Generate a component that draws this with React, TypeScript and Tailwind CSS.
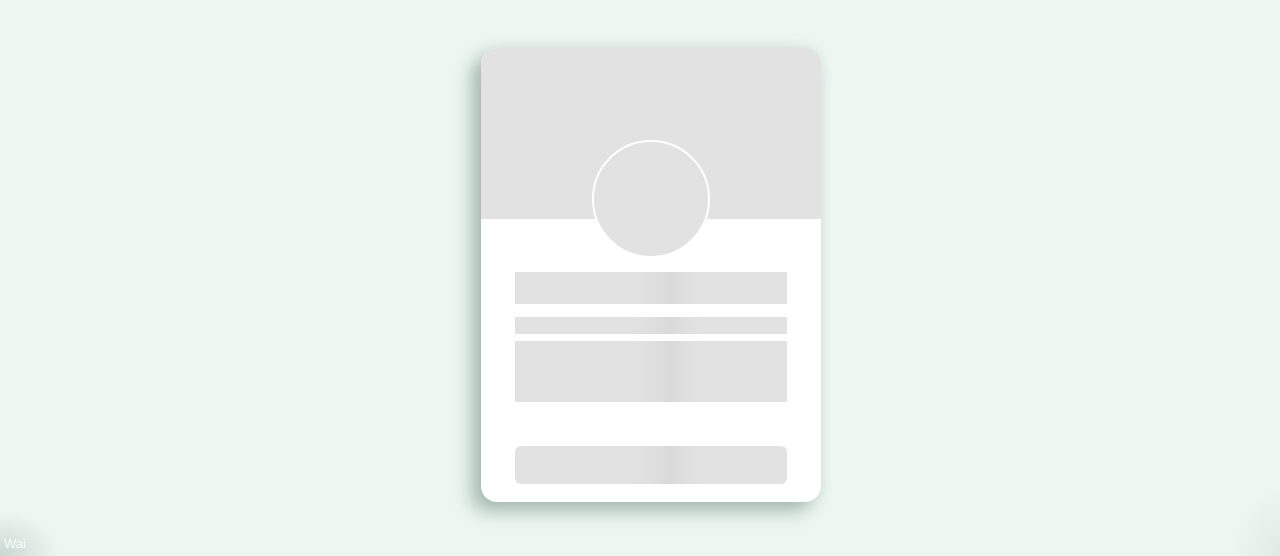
export default function App() {
  const shimmer =
    "bg-[linear-gradient(90deg,#e2e2e2_0%,#e2e2e2_42%,#dfdfdf_50%,#d9d9d9_57%,#dfdfdf_63%,#e2e2e2_69%,#e2e2e2_100%)]";

  return (
    <div className="relative w-full h-[556px] overflow-hidden bg-[#edf7f2] font-['Liberation_Sans',sans-serif]">
      {/* corner vignette */}
      <div className="absolute left-0 bottom-0 w-[60px] h-[45px] bg-[radial-gradient(ellipse_at_bottom_left,rgba(160,175,170,0.45)_0%,transparent_70%)]" />
      <div className="absolute right-0 bottom-0 w-[50px] h-[70px] bg-[radial-gradient(ellipse_at_bottom_right,rgba(200,212,207,0.35)_0%,transparent_70%)]" />
      <span className="absolute left-[4px] bottom-[3px] text-[13px] text-white/80">Wai</span>

      <div className="flex h-full items-center justify-center pl-[22px] pb-[6px]">
        <div className="w-[340px] h-[454px] rounded-[16px] bg-white overflow-hidden flex flex-col shadow-[-10px_10px_18px_rgba(95,125,110,0.45),0_0_14px_rgba(120,150,135,0.18)]">
          <div className="relative h-[171px] shrink-0 bg-[#e2e2e2]">
            <div className="absolute left-1/2 top-[92px] -translate-x-1/2 w-[118px] h-[118px] rounded-full bg-[#e2e2e2] border-2 border-white" />
          </div>
          <div className="flex flex-col px-[34px] pt-[53px]">
            <div className={`h-[32px] ${shimmer}`} />
            <div className={`h-[17px] mt-[13px] ${shimmer}`} />
            <div className={`h-[61px] mt-[7px] ${shimmer}`} />
            <div className={`h-[38px] mt-[44px] rounded-[6px] ${shimmer}`} />
          </div>
        </div>
      </div>
    </div>
  );
}
